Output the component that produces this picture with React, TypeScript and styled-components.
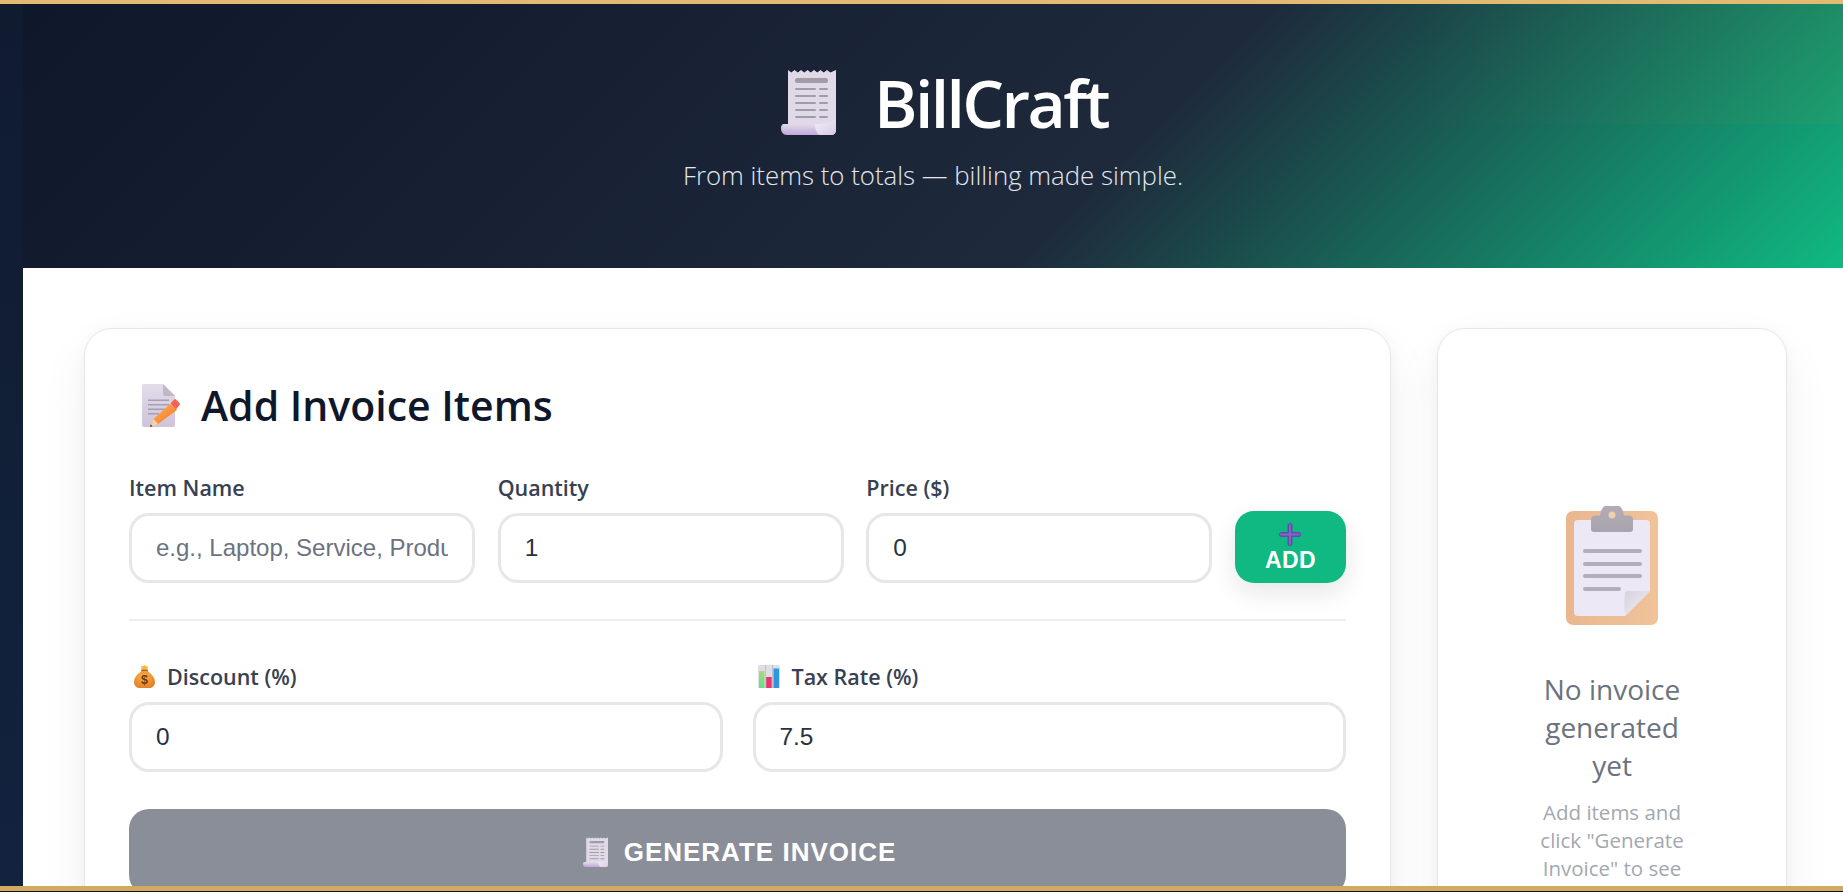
import React from "react";
import styled, { createGlobalStyle } from "styled-components";

const Global = createGlobalStyle`
  html, body { margin: 0; height: 100%; overflow: hidden; background: #0b1418; }
  #root { height: 100%; }
  * { box-sizing: border-box; }
`;

const sans = `"Open Sans", "Noto Sans", "Liberation Sans", sans-serif`;
const arial = `"Liberation Sans", Arial, sans-serif`;

const Window = styled.div`
  height: 891px;
  border-top: 4px solid #e3ba72;
  border-bottom: 5px solid #d2a95f;
  padding-left: 23px;
  background: linear-gradient(180deg, #101b30 0%, #12233f 100%);
  overflow: hidden;
`;
const Shell = styled.div`
  height: 100%;
  background: #fff;
  overflow: hidden;
  font-family: ${sans};
`;
const Header = styled.header`
  position: relative;
  height: 264px;
  padding-top: 58px;
  display: flex;
  flex-direction: column;
  align-items: center;
  background: linear-gradient(135deg, #0f172a 0%, #1e293b 60%, #10b981 100%);
  &::after {
    content: "";
    position: absolute;
    left: 0;
    right: 0;
    top: 0;
    height: 120px;
    background: linear-gradient(90deg, rgba(245, 158, 11, 0) 76%, rgba(245, 158, 11, 0.045) 100%);
  }
`;
const Brand = styled.div`
  display: flex;
  align-items: center;
  height: 80px;
`;
const BrandIcon = styled.span`
  display: flex;
  margin: 0 38px 0 23px;
`;
const Title = styled.h1`
  margin: 0;
  font-size: 66px;
  font-weight: 600;
  line-height: 80px;
  color: #fff;
  letter-spacing: -2.6px;
`;
const Tagline = styled.p`
  margin: 17px 0 0;
  font-size: 25.8px;
  font-weight: 300;
  line-height: 32px;
  color: #e2e8f0;
`;
const Main = styled.main`
  display: grid;
  grid-template-columns: 1307px 350px;
  column-gap: 46px;
  padding: 60px 0 0 61px;
`;
const Card = styled.section`
  background: #fff;
  border: 1px solid #e5e7eb;
  border-radius: 28px;
  box-shadow: 0 2px 14px rgba(15, 23, 42, 0.04), 0 20px 50px rgba(15, 23, 42, 0.06);
  height: 640px;
`;
const FormCard = styled(Card)`
  padding: 52px 44px 0;
`;
const Heading = styled.h2`
  margin: 0;
  display: flex;
  align-items: center;
  gap: 21px;
  height: 48px;
  padding-left: 13px;
  font-size: 41px;
  font-weight: 600;
  color: #0f172a;
`;
const ItemRow = styled.div`
  margin-top: 44px;
  display: grid;
  grid-template-columns: 346px 346px 346px 111px;
  column-gap: 22.67px;
  align-items: end;
`;
const Divider = styled.hr`
  margin: 36px 0 0;
  border: 0;
  border-top: 2px solid #eceef1;
`;
const RateRow = styled.div`
  margin-top: 41px;
  display: grid;
  grid-template-columns: 1fr 1fr;
  column-gap: 30px;
`;
const Field = styled.label`
  display: flex;
  flex-direction: column;
`;
const Label = styled.span`
  display: flex;
  align-items: center;
  height: 28px;
  margin-bottom: 12px;
  font-size: 21.5px;
  font-weight: 600;
  color: #374151;
`;
const LabelIcon = styled.span`
  display: flex;
  margin: 0 12px 0 5px;
`;
const Input = styled.input`
  width: 100%;
  height: 70px;
  padding: 0 24px;
  border: 3px solid #e5e7eb;
  border-radius: 20px;
  outline: none;
  background: #fff;
  font-family: ${arial};
  font-size: 24.4px;
  color: #283241;
  &::placeholder { color: #6b7280; opacity: 1; font-size: 24px; }
`;
const AddButton = styled.button`
  height: 72px;
  border: 0;
  border-radius: 19px;
  background: #10b981;
  color: #fff;
  font-family: ${arial};
  font-size: 23px;
  font-weight: 700;
  letter-spacing: 0.4px;
  line-height: 23px;
  display: flex;
  flex-direction: column;
  align-items: center;
  justify-content: center;
  gap: 3px;
  box-shadow: 0 10px 24px rgba(15, 23, 42, 0.1);
`;
const GenerateButton = styled.button`
  width: 100%;
  height: 86px;
  margin-top: 37px;
  padding: 0 0 0 4px;
  border: 0;
  border-radius: 20px;
  background: #8a8e98;
  color: #fff;
  font-family: ${arial};
  font-size: 26px;
  font-weight: 700;
  letter-spacing: 1px;
  display: flex;
  align-items: center;
  justify-content: center;
  gap: 16px;
`;
const EmptyCard = styled(Card)`
  display: flex;
  flex-direction: column;
  align-items: center;
  padding: 177px 94px 0;
  text-align: center;
`;
const EmptyTitle = styled.h3`
  margin: 45px 0 0;
  font-size: 28px;
  font-weight: 400;
  line-height: 38px;
  color: #6b7280;
`;
const EmptyText = styled.p`
  margin: 14px 0 0;
  font-size: 20.5px;
  line-height: 28px;
  color: #a3a8b0;
`;

const Receipt = ({ w, h }: { w: number; h: number }) => (
  <svg width={w} height={h} viewBox="0 0 55 66" aria-hidden="true">
    <defs>
      <linearGradient id="rcpt-roll" x1="0" y1="0" x2="0" y2="1">
        <stop offset="0" stopColor="#e2dbe9" />
        <stop offset="1" stopColor="#bfa8dc" />
      </linearGradient>
      <linearGradient id="rcpt-curl" x1="0" y1="0" x2="1" y2="1">
        <stop offset="0" stopColor="#f4f0f8" />
        <stop offset="1" stopColor="#d6cae6" />
      </linearGradient>
    </defs>
    <path d="M7 1l3.300 2.500L13.500 1l3.300 2.500L20 1l3.300 2.500L26.500 1l3.300 2.500L33 1l3.300 2.500L39.500 1l3.300 2.500L46 1l3.300 2.500L55 1v60c0 3-2 5-5 5H10V55H7z" fill="#e0d9e7" />
    <path d="M3 55h31c0 5 1.500 11 6 11H6c-4 0-6-3-6-7 0-2 1-4 3-4z" fill="url(#rcpt-roll)" />
    <path d="M34 55c0 6 3 11 8 11h8c3 0 5-2 5-5V50c-4 4-14 5-21 5z" fill="url(#rcpt-curl)" />
    <g fill="#a09ca6">
      <rect x="14" y="9" width="33" height="5" rx="2.500" />
      <rect x="14" y="19" width="21" height="2" rx="1" />
      <rect x="38" y="19" width="9" height="2" rx="1" />
      <rect x="14" y="26" width="21" height="2" rx="1" />
      <rect x="38" y="26" width="9" height="2" rx="1" />
      <rect x="14" y="33" width="21" height="2" rx="1" />
      <rect x="38" y="33" width="9" height="2" rx="1" />
      <rect x="14" y="40" width="21" height="2" rx="1" />
      <rect x="38" y="40" width="9" height="2" rx="1" />
      <rect x="14" y="47" width="21" height="2" rx="1" />
      <rect x="38" y="47" width="9" height="2" rx="1" />
    </g>
  </svg>
);

const Memo = () => (
  <svg width="38" height="43" viewBox="0 0 38 43" aria-hidden="true">
    <defs>
      <linearGradient id="memo-page" x1="0" y1="0" x2="0" y2="1">
        <stop offset="0" stopColor="#e3dce9" />
        <stop offset="1" stopColor="#cfc3db" />
      </linearGradient>
      <linearGradient id="memo-pencil" x1="0" y1="0" x2="1" y2="1">
        <stop offset="0" stopColor="#ffb65a" />
        <stop offset="1" stopColor="#f4701f" />
      </linearGradient>
    </defs>
    <path d="M2 0h19l12 12v29a2 2 0 0 1-2 2H2a2 2 0 0 1-2-2V2a2 2 0 0 1 2-2z" fill="url(#memo-page)" />
    <path d="M21 0l12 12H23a2 2 0 0 1-2-2z" fill="#bfb9c7" />
    <g fill="#a5a0ae">
      <rect x="6" y="15.500" width="21" height="1.500" />
      <rect x="6" y="20" width="21" height="1.500" />
      <rect x="6" y="24.500" width="17" height="1.500" />
      <rect x="6" y="29" width="11" height="1.500" />
    </g>
    <path d="M28 20l7 6-19 14-7 3 2.500-8z" fill="url(#memo-pencil)" />
    <path d="M28.500 19.500l3.500-4a1.500 1.500 0 0 1 2 0l3.500 3.500a1.500 1.500 0 0 1 0 2l-3.500 4.500z" fill="#f9604f" />
    <path d="M11.500 35l4.500 5-7 3z" fill="#f6d3a8" />
    <path d="M8.800 40.500l1.700 1.800-2.500.7z" fill="#4b2b4f" />
  </svg>
);

const Bag = () => (
  <svg width="21" height="23" viewBox="0 0 21 23" aria-hidden="true">
    <defs>
      <radialGradient id="bag-body" cx="0.45" cy="0.35" r="0.75">
        <stop offset="0" stopColor="#fbb040" />
        <stop offset="1" stopColor="#e07c25" />
      </radialGradient>
    </defs>
    <path d="M7.500 5.500h6c.5 2 7.500 5 7.500 11.500 0 4-3 6-6 6H6c-3 0-6-2-6-6 0-6.500 7-9.500 7.500-11.500z" fill="url(#bag-body)" />
    <path d="M10.500 0l1.300 1.400 2.200-.3-.8 3.400h-5.400l-.8-3.400 2.200.3z" fill="#f7b62f" />
    <rect x="7" y="4.500" width="7" height="1.500" rx="0.700" fill="#b4622a" />
    <text x="10.500" y="19" textAnchor="middle" fontFamily={arial} fontSize="12.500" fontWeight="700" fill="#6e3a16">$</text>
  </svg>
);

const Chart = () => (
  <svg width="22" height="23" viewBox="0 0 22 23" aria-hidden="true">
    <defs>
      <linearGradient id="bar-green" x1="0" y1="0" x2="0" y2="1">
        <stop offset="0" stopColor="#a5dd7a" />
        <stop offset="1" stopColor="#5fe08a" />
      </linearGradient>
      <linearGradient id="bar-blue" x1="0" y1="0" x2="0" y2="1">
        <stop offset="0" stopColor="#1f9bea" />
        <stop offset="1" stopColor="#3d8fd8" />
      </linearGradient>
    </defs>
    <rect width="22" height="23" rx="1.500" fill="#e1dde5" />
    <rect x="7" y="0" width="1" height="23" fill="#c4bfca" />
    <rect x="14" y="0" width="1" height="23" fill="#c4bfca" />
    <rect x="1" y="6" width="5.500" height="17" fill="url(#bar-green)" />
    <rect x="8.200" y="12" width="5.500" height="11" fill="#e8336f" />
    <rect x="15.500" y="3.500" width="5.500" height="19.500" fill="url(#bar-blue)" />
  </svg>
);

const Plus = () => (
  <svg width="22" height="23" viewBox="0 0 22 23" aria-hidden="true">
    <rect x="8.500" y="0" width="5" height="23" rx="2.500" fill="#6649ad" />
    <rect x="0" y="9" width="22" height="5" rx="2.500" fill="#6649ad" />
    <rect x="10" y="1" width="2" height="21" rx="1" fill="#7f68c4" />
    <rect x="1" y="10.500" width="20" height="2" rx="1" fill="#7f68c4" />
  </svg>
);

const Clipboard = () => (
  <svg width="92" height="119" viewBox="0 0 92 119" aria-hidden="true">
    <defs>
      <linearGradient id="clip-board" x1="0" y1="0" x2="1" y2="0">
        <stop offset="0" stopColor="#e9b78f" />
        <stop offset="1" stopColor="#f0c399" />
      </linearGradient>
      <linearGradient id="clip-fold" x1="0" y1="0" x2="1" y2="1">
        <stop offset="0" stopColor="#d5d1de" />
        <stop offset="1" stopColor="#f4f1f8" />
      </linearGradient>
      <linearGradient id="clip-clip" x1="0" y1="0" x2="0" y2="1">
        <stop offset="0" stopColor="#b3adb6" />
        <stop offset="1" stopColor="#a9a4ae" />
      </linearGradient>
    </defs>
    <rect x="0" y="5" width="92" height="114" rx="7" fill="url(#clip-board)" />
    <path d="M12 14h68a4 4 0 0 1 4 4v67l-25 25H12a4 4 0 0 1-4-4V18a4 4 0 0 1 4-4z" fill="#ede8f5" />
    <path d="M84 85L59 110c-1-8-1-16 0-22 0-2 1-3 3-3z" fill="url(#clip-fold)" />
    <path d="M34 9.500a12 12 0 0 1 24 0h5a4 4 0 0 1 4 4V23a3 3 0 0 1-3 3H28a3 3 0 0 1-3-3v-9.500a4 4 0 0 1 4-4z" fill="url(#clip-clip)" />
    <circle cx="46" cy="9" r="3.500" fill="#efcfae" />
    <g fill="#b3afb8">
      <rect x="17" y="43" width="59" height="4" rx="2" />
      <rect x="17" y="56" width="59" height="4" rx="2" />
      <rect x="17" y="68" width="59" height="4" rx="2" />
      <rect x="17" y="81" width="38" height="4" rx="2" />
    </g>
  </svg>
);

export default function App() {
  return (
    <Window>
      <Global />
      <Shell>
        <Header>
          <Brand>
            <BrandIcon><Receipt w={55} h={66} /></BrandIcon>
            <Title>BillCraft</Title>
          </Brand>
          <Tagline>From items to totals — billing made simple.</Tagline>
        </Header>
        <Main>
          <FormCard>
            <Heading><Memo />Add Invoice Items</Heading>
            <ItemRow>
              <Field>
                <Label>Item Name</Label>
                <Input type="text" placeholder="e.g., Laptop, Service, Product" />
              </Field>
              <Field>
                <Label>Quantity</Label>
                <Input type="number" defaultValue="1" />
              </Field>
              <Field>
                <Label>Price ($)</Label>
                <Input type="number" defaultValue="0" />
              </Field>
              <AddButton type="button"><Plus />ADD</AddButton>
            </ItemRow>
            <Divider />
            <RateRow>
              <Field>
                <Label><LabelIcon><Bag /></LabelIcon>Discount (%)</Label>
                <Input type="number" defaultValue="0" />
              </Field>
              <Field>
                <Label><LabelIcon><Chart /></LabelIcon>Tax Rate (%)</Label>
                <Input type="number" defaultValue="7.5" />
              </Field>
            </RateRow>
            <GenerateButton type="button"><Receipt w={25} h={30} />GENERATE INVOICE</GenerateButton>
          </FormCard>
          <EmptyCard>
            <Clipboard />
            <EmptyTitle>No invoice generated yet</EmptyTitle>
            <EmptyText>Add items and click "Generate Invoice" to see your bill here</EmptyText>
          </EmptyCard>
        </Main>
      </Shell>
    </Window>
  );
}
